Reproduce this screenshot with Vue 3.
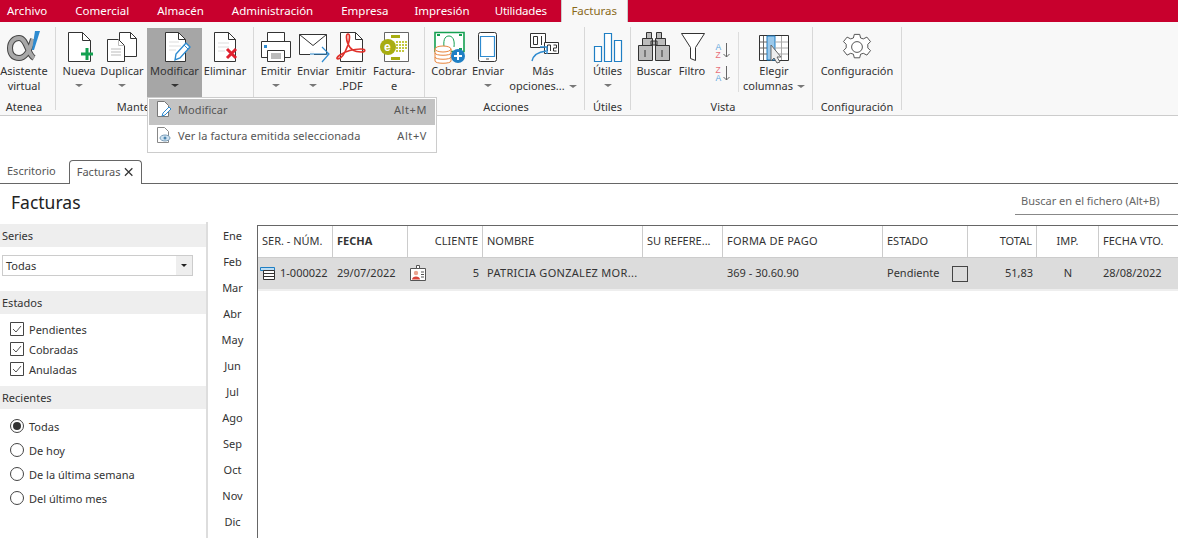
<template>
  <div class="app">
    <!-- Menu bar -->
    <div class="menubar">
      <span
        v-for="tab in menuTabs"
        :key="tab"
        :class="['menu-tab', { active: tab === 'Facturas' }]"
      >{{ tab }}</span>
    </div>

    <!-- Ribbon -->
    <div class="ribbon">
      <section class="group g-atenea">
        <div class="btns">
          <div class="btn w-48">
            <svg class="ico" width="36" height="34" viewBox="0 0 36 34">
              <path d="M27 9C24 20 20 28 13 28 7 28 4 24 4 18 4 12 8 8 13 8 21 8 21 24 28 28" fill="none" stroke="#444" stroke-width="6" />
              <path d="M27 9C24 20 20 28 13 28 7 28 4 24 4 18 4 12 8 8 13 8 21 8 21 24 28 28" fill="none" stroke="#a8a8a8" stroke-width="4" />
              <path d="M29 1h5l-6 19h-2z" fill="#2e8bd0" />
            </svg>
            <span class="lbl">Asistente</span>
            <span class="lbl">virtual</span>
          </div>
        </div>
        <div class="group-name">Atenea</div>
      </section>

      <section class="group g-mant">
        <div class="btns">
          <div class="btn w-38">
            <svg class="ico" width="34" height="34" viewBox="0 0 34 34">
              <path d="M6.5 2.5h14l8 8v21h-22z" fill="#fff" stroke="#333" />
              <path d="M20.5 2.5v8h8" fill="none" stroke="#333" />
              <path d="M25 18v12M19 24h12" stroke="#12a150" stroke-width="3" />
            </svg>
            <span class="lbl">Nueva</span>
            <span class="caret"></span>
          </div>
          <div class="btn w-48">
            <svg class="ico" width="34" height="34" viewBox="0 0 34 34">
              <path d="M14.5 2.5h11l6 6v18h-17z" fill="#fff" stroke="#333" />
              <path d="M25.5 2.5v6h6" fill="none" stroke="#333" />
              <path d="M2.5 9.5h11l6 6v16h-17z" fill="#fff" stroke="#333" />
              <path d="M13.5 9.5v6h6M6 19h10M6 22h10M6 25h10" fill="none" stroke="#bbb" />
            </svg>
            <span class="lbl">Duplicar</span>
            <span class="caret"></span>
          </div>
          <div class="btn w-55 pressed">
            <svg class="ico" width="34" height="34" viewBox="0 0 34 34">
              <path d="M7.5 2.5h13l7 7v22h-20z" fill="#fff" stroke="#333" />
              <path d="M20.5 2.5v7h7" fill="none" stroke="#333" />
              <path d="M11 12h10M11 16h12M11 20h7" stroke="#ddd" />
              <path d="M17 30l1-6 10-11 4 4-10 11z" fill="#fff" stroke="#2e8bd0" stroke-width="1.4" />
              <path d="M26 15l4 4" stroke="#2e8bd0" />
            </svg>
            <span class="lbl">Modificar</span>
            <span class="caret dark"></span>
          </div>
          <div class="btn w-46">
            <svg class="ico" width="34" height="34" viewBox="0 0 34 34">
              <path d="M6.5 2.5h14l7 7v22h-21z" fill="#fff" stroke="#333" />
              <path d="M20.5 2.5v7h7" fill="none" stroke="#333" />
              <path d="M10 13h11M10 17h11M10 21h7" stroke="#ddd" />
              <path d="M19 19l9 9M28 19l-9 9" stroke="#e0212f" stroke-width="3" />
            </svg>
            <span class="lbl">Eliminar</span>
          </div>
        </div>
        <div class="group-name">Mantenimiento</div>
      </section>

      <section class="group g-emit">
        <div class="btns">
          <div class="btn w-36">
            <svg class="ico" width="34" height="34" viewBox="0 0 34 34">
              <path d="M8.5 2.5h17v9h-17z" fill="#fff" stroke="#333" />
              <path d="M2.5 11.5h29v16h-29z" fill="#fff" stroke="#333" />
              <path d="M5 15h3v3H5z" fill="#2e8bd0" />
              <path d="M8.5 20.5h17v11h-17z" fill="#fff" stroke="#333" />
              <path d="M12 24h10M12 26h10M12 28h10" stroke="#777" />
            </svg>
            <span class="lbl">Emitir</span>
            <span class="caret"></span>
          </div>
          <div class="btn w-38">
            <svg class="ico" width="34" height="34" viewBox="0 0 34 34">
              <path d="M3.5 4.500h27v20h-27z" fill="#fff" stroke="#333" />
              <path d="M3.500 4.500l13.500 11 13.500-11" fill="none" stroke="#333" />
              <path d="M14 21h4v6h-4z" fill="#f8f8f8" />
              <path d="M14 24h18M26 17l7 7-7 8" fill="none" stroke="#2e8bd0" stroke-width="1.2" />
            </svg>
            <span class="lbl">Enviar</span>
            <span class="caret"></span>
          </div>
          <div class="btn w-38">
            <svg class="ico" width="34" height="34" viewBox="0 0 34 34">
              <path d="M6.5 2.5h15l7 7v22h-22z" fill="#fff" stroke="#333" />
              <path d="M21.5 2.5v7h7" fill="none" stroke="#333" />
              <path d="M4 29c3 0 7-6 10-14 2-6 2-11 0-11-2 0-2 5 0 10 2 5 7 8 13 8 5 0 5-3 0-3-6 0-15 2-21 6-3 2-4 4-2 4z" fill="none" stroke="#e0302a" stroke-width="1.7" />
            </svg>
            <span class="lbl">Emitir</span>
            <span class="lbl">.PDF</span>
          </div>
          <div class="btn w-48">
            <svg class="ico" width="34" height="34" viewBox="0 0 34 34">
              <path d="M7.5 2.5h24v29h-24z" fill="#fff" stroke="#666" />
              <path d="M14 5h9v3h-9zM14 27h9v3h-9z" fill="#a8ad12" />
              <circle cx="11" cy="17" r="8" fill="#a8ad12" />
              <text x="7" y="21" class="e-mark">e</text>
              <path d="M19 12h11M19 15h11M19 18h11M19 21h9" stroke="#c4c840" stroke-width="2" stroke-dasharray="2 1" />
            </svg>
            <span class="lbl">Factura-</span>
            <span class="lbl">e</span>
          </div>
        </div>
      </section>

      <section class="group g-acc">
        <div class="btns">
          <div class="btn w-42">
            <svg class="ico" width="34" height="34" viewBox="0 0 34 34">
              <path d="M3 2.500h29v19H3z" fill="#fff" stroke="#14a050" stroke-width="1.6" />
              <path d="M12 17c-1-9 2-11 5-11s6 3 5 11" fill="none" stroke="#14a050" />
              <path d="M5 5h3M27 5h3M5 19h3M27 19h3" stroke="#14a050" stroke-width="2" />
              <path d="M3 19v12c0 3 16 3 16 0V19z" fill="#fff" stroke="#e8833a" />
              <ellipse cx="11" cy="19" rx="8" ry="3" fill="#fff" stroke="#e8833a" />
              <path d="M3 23c0 3 16 3 16 0M3 27c0 3 16 3 16 0" fill="none" stroke="#e8833a" />
              <circle cx="26" cy="26" r="7" fill="#1f7fc4" />
              <path d="M26 22v8M22 26h8" stroke="#fff" stroke-width="2" />
            </svg>
            <span class="lbl">Cobrar</span>
          </div>
          <div class="btn w-36">
            <svg class="ico" width="34" height="34" viewBox="0 0 34 34">
              <rect x="7.500" y="2.500" width="18" height="29" rx="2" fill="#fff" stroke="#333" />
              <path d="M9.500 6.500h14v20h-14z" fill="#fff" stroke="#2e8bd0" stroke-width="1.2" />
              <path d="M15 29h3" stroke="#555" />
            </svg>
            <span class="lbl">Enviar</span>
            <span class="caret"></span>
          </div>
          <div class="btn w-74">
            <svg class="ico" width="34" height="34" viewBox="0 0 34 34">
              <path d="M4.500 3.500h15v14h-15z" fill="#fff" stroke="#333" />
              <path d="M18.500 12.500h14v11h-14z" fill="#fff" stroke="#333" />
              <path d="M7.500 6.500h4v8h-4zM15.500 6v9M21.500 21v-6h3v6M27.500 15h3v3h-3v3h3" fill="none" stroke="#333" />
              <path d="M6 31c1-5 6-9 14-10M14 17h7v7" fill="none" stroke="#2e8bd0" stroke-width="1.4" />
            </svg>
            <span class="lbl">Más</span>
            <span class="lbl">opciones...<span class="caret inline"></span></span>
          </div>
        </div>
        <div class="group-name">Acciones</div>
      </section>

      <section class="group g-util">
        <div class="btns">
          <div class="btn w-45">
            <svg class="ico" width="34" height="34" viewBox="0 0 34 34">
              <path d="M3.500 16.500h7v15h-7zM13.500 3.500h7v28h-7zM23.500 10.500h7v21h-7z" fill="#fff" stroke="#1f7fc4" stroke-width="1.2" />
            </svg>
            <span class="lbl">Útiles</span>
            <span class="caret"></span>
          </div>
        </div>
        <div class="group-name">Útiles</div>
      </section>

      <section class="group g-vista">
        <div class="btns">
          <div class="btn w-40">
            <svg class="ico" width="34" height="34" viewBox="0 0 34 34">
              <path d="M9.500 2.500h5v6h-5zM19.500 2.500h5v6h-5zM5.500 8.500h10v7h-10zM18.500 8.500h10v7h-10zM14 11h6v4h-6zM1.500 15.500h14v15h-14zM18.500 15.500h14v15h-14z" fill="#bbb" stroke="#333" />
              <path d="M8 20v7M25 20v7" stroke="#333" />
            </svg>
            <span class="lbl">Buscar</span>
          </div>
          <div class="btn w-36">
            <svg class="ico" width="30" height="34" viewBox="0 0 30 34">
              <path d="M4.500 3.500h23l-9 14v13l-5-2v-11z" fill="#fff" stroke="#333" />
            </svg>
            <span class="lbl">Filtro</span>
          </div>
          <div class="sorts">
            <svg width="20" height="17" viewBox="0 0 20 17">
              <text x="1.500" y="7.500" class="sort a">A</text>
              <text x="1.500" y="16" class="sort z">Z</text>
              <path d="M12.500 1v14M9.500 12l3 3 3-3" fill="none" stroke="#666" />
            </svg>
            <svg width="20" height="17" viewBox="0 0 20 17">
              <text x="1.500" y="7.500" class="sort z">Z</text>
              <text x="1.500" y="16" class="sort a">A</text>
              <path d="M12.500 1v14M9.500 12l3 3 3-3" fill="none" stroke="#666" />
            </svg>
          </div>
          <div class="btn w-70">
            <svg class="ico" width="34" height="34" viewBox="0 0 34 34">
              <path d="M2.500 5.500h29v25h-29z" fill="#fff" stroke="#333" />
              <path d="M10 6h8v24h-8z" fill="#9ac8ea" stroke="#1f7fc4" />
              <path d="M18 12h13M18 18h13M18 24h13M24.500 6v24" stroke="#aaa" />
              <path d="M3 12h7M3 18h7M3 24h7M6.500 6v24" stroke="#666" />
              <path d="M14 15v16l3-3 3 5 3-1-3-5h4z" fill="#eee" stroke="#666" />
            </svg>
            <span class="lbl">Elegir</span>
            <span class="lbl">columnas<span class="caret inline"></span></span>
          </div>
        </div>
        <div class="group-name">Vista</div>
      </section>

      <section class="group g-conf">
        <div class="btns">
          <div class="btn w-88">
            <svg class="ico" width="34" height="34" viewBox="0 0 34 34">
              <g transform="translate(1.700 1.700) scale(.9)">
                <path d="M14 3h6l1 4 3 1 4-2 4 5-3 3v4l3 3-4 5-4-2-3 1-1 4h-6l-1-4-3-1-4 2-4-5 3-3v-4l-3-3 4-5 4 2 3-1z" fill="#fff" stroke="#444" />
                <circle cx="17" cy="17" r="6" fill="#fff" stroke="#444" />
              </g>
            </svg>
            <span class="lbl">Configuración</span>
          </div>
        </div>
        <div class="group-name">Configuración</div>
      </section>

      <!-- Dropdown of Modificar -->
      <div class="dropdown">
        <div class="dd-item on">
          <svg width="16" height="18" viewBox="0 0 16 18">
            <path d="M1.500 1.500h7l4 4v11h-11z" fill="#fff" stroke="#777" />
            <path d="M6 16l1-3 6-6 2 2-6 6z" fill="#fff" stroke="#2e8bd0" />
          </svg>
          <span class="dd-text">Modificar</span>
          <span class="dd-key">Alt+M</span>
        </div>
        <div class="dd-item">
          <svg width="16" height="18" viewBox="0 0 16 18">
            <path d="M1.500 1.500h7l4 4v11h-11z" fill="#fff" stroke="#888" />
            <ellipse cx="9" cy="12" rx="5" ry="3" fill="#cfe2f0" stroke="#7a9db8" />
            <circle cx="9" cy="12" r="1.500" fill="#4d86b0" />
          </svg>
          <span class="dd-text">Ver la factura emitida seleccionada</span>
          <span class="dd-key">Alt+V</span>
        </div>
      </div>
    </div>

    <!-- Document tabs -->
    <div class="doc-tabs">
      <span class="doc-tab">Escritorio</span>
      <span class="doc-tab current">
        Facturas
        <svg width="10" height="10" viewBox="0 0 10 10">
          <path d="M1 1l8 8M9 1l-8 8" stroke="#333" stroke-width="1.300" />
        </svg>
      </span>
    </div>

    <div class="title-row">
      <h1>Facturas</h1>
      <div class="search">Buscar en el fichero (Alt+B)</div>
    </div>

    <div class="body">
      <aside class="filters">
        <div class="sec">Series</div>
        <div class="select">
          <span>Todas</span>
          <span class="select-btn"><i></i></span>
        </div>
        <div class="sec">Estados</div>
        <div class="checks">
          <label v-for="c in estados" :key="c" class="check">
            <svg width="14" height="14" viewBox="0 0 14 14">
              <path d="M.5.500h13v13H.5z" fill="#fff" stroke="#444" />
              <path d="M3 7l3 3 5-6" fill="none" stroke="#555" />
            </svg>
            {{ c }}
          </label>
        </div>
        <div class="sec">Recientes</div>
        <div class="radios">
          <label v-for="(r, i) in recientes" :key="r" class="radio">
            <span :class="['dot', { sel: i === 0 }]"></span>
            {{ r }}
          </label>
        </div>
      </aside>

      <div class="months">
        <span v-for="m in months" :key="m">{{ m }}</span>
      </div>

      <div class="grid">
        <div class="row head">
          <div class="cell">SER. - NÚM.</div>
          <div class="cell"><b>FECHA</b></div>
          <div class="cell right">CLIENTE</div>
          <div class="cell">NOMBRE</div>
          <div class="cell">SU REFERE...</div>
          <div class="cell wide">FORMA DE PAGO</div>
          <div class="cell">ESTADO</div>
          <div class="cell right">TOTAL</div>
          <div class="cell center">IMP.</div>
          <div class="cell">FECHA VTO.</div>
        </div>
        <div class="row data">
          <div class="cell first">
            <svg width="15" height="14" viewBox="0 0 15 14">
              <path d="M.5 1.500h14v3H.5z" fill="#bcdcf2" stroke="#1f7fc4" />
              <path d="M3.500 4.500h11v9h-11zM3.500 7.500h11M3.500 10.500h11" fill="#fff" stroke="#333" />
            </svg>
            1-000022
          </div>
          <div class="cell">29/07/2022</div>
          <div class="cell right client">
            <svg class="badge" width="17" height="16" viewBox="0 0 17 16">
              <path d="M.5 3.500h15v12H.5z" fill="#fff" stroke="#555" />
              <path d="M6.500.5h3v3h-3z" fill="#fff" stroke="#555" />
              <circle cx="6" cy="8" r="2.200" fill="#eba48f" />
              <path d="M2 14.500c0-4 8-4 8 0z" fill="#d9453a" />
              <path d="M11 7h3M11 9.500h3M11 12h3" stroke="#555" />
            </svg>
            5
          </div>
          <div class="cell wider">PATRICIA GONZALEZ MOR...</div>
          <div class="cell"></div>
          <div class="cell">369 - 30.60.90</div>
          <div class="cell estado">Pendiente <span class="box"></span></div>
          <div class="cell right">51,83</div>
          <div class="cell center">N</div>
          <div class="cell">28/08/2022</div>
        </div>
      </div>
    </div>
  </div>
</template>

<script setup>
const menuTabs = ['Archivo', 'Comercial', 'Almacén', 'Administración', 'Empresa', 'Impresión', 'Utilidades', 'Facturas'];
const estados = ['Pendientes', 'Cobradas', 'Anuladas'];
const recientes = ['Todas', 'De hoy', 'De la última semana', 'Del último mes'];
const months = ['Ene', 'Feb', 'Mar', 'Abr', 'May', 'Jun', 'Jul', 'Ago', 'Sep', 'Oct', 'Nov', 'Dic'];
</script>

<style>
html, body { margin: 0; overflow: hidden; background: #fff; }
</style>

<style scoped>
.app {
  width: 1178px;
  height: 538px;
  overflow: hidden;
  font-family: "Noto Sans", sans-serif;
  font-size: 11px;
  color: #333;
  background: #fff;
}

/* Menu bar */
.menubar {
  display: flex;
  gap: 28px;
  height: 22px;
  padding-left: 7px;
  background: #c8002d;
  color: #fff;
  font-size: 11.5px;
  line-height: 22px;
}
.menu-tab:nth-child(6) { margin-left: -2px; }
.menu-tab:nth-child(7) { margin-left: -3px; letter-spacing: -.2px; }
.menu-tab.active {
  width: 67px;
  margin-left: -14px;
  box-sizing: border-box;
  text-align: center;
  background: #f8f8f8;
  color: #8a6a1a;
  border: 1px solid #ccc;
  border-width: 0 1px;
}

/* Ribbon */
.ribbon {
  position: relative;
  display: flex;
  height: 94px;
  padding-top: 5px;
  box-sizing: border-box;
  background: #f8f8f8;
  border-bottom: 1px solid #ccc;
  margin-bottom: 44px;
}
.group {
  display: flex;
  flex-direction: column;
  height: 83px;
  box-sizing: border-box;
  border-right: 1px solid #d8d8d8;
}
.btns { display: flex; height: 73px; align-items: flex-start; }
.group-name {
  height: 10px;
  line-height: 14px;
  text-align: center;
  white-space: nowrap;
}
.g-atenea { width: 56px; padding-right: 7px; }
.g-mant { width: 198px; padding-left: 4px; }
.g-emit { width: 171px; padding-left: 4px; }
.g-acc { width: 160px; padding-left: 3px; }
.g-util { width: 46px; }
.g-vista { width: 182px; padding-left: 3px; }
.g-conf { width: 89px; }

.btn {
  display: flex;
  flex-direction: column;
  align-items: center;
  height: 69px;
  margin-top: 1px;
  padding-top: 2px;
  box-sizing: border-box;
  white-space: nowrap;
}
.ico { flex: none; margin-bottom: -1px; }
.lbl { height: 15px; line-height: 15px; }
.w-36 { width: 36px; }
.w-38 { width: 38px; }
.w-40 { width: 40px; }
.w-42 { width: 42px; }
.w-45 { width: 45px; }
.w-46 { width: 46px; }
.w-48 { width: 48px; }
.w-55 { width: 55px; margin-left: 1px; }
.w-70 { width: 70px; }
.w-74 { width: 74px; }
.w-88 { width: 88px; }
.pressed { background: #a6a6a6; }

.caret {
  width: 0;
  height: 0;
  margin-top: 6px;
  border-left: 4px solid transparent;
  border-right: 4px solid transparent;
  border-top: 3px solid #777;
}
.caret.dark { border-top-color: #333; }
.caret.inline {
  display: inline-block;
  margin: 0 0 2px 4px;
  vertical-align: middle;
}

.e-mark { font: bold 12px "Liberation Sans", sans-serif; fill: #fff; }
.sort { font: 8.5px "Liberation Sans", sans-serif; }
.sort.a { fill: #5aa6dc; }
.sort.z { fill: #e8707a; }

.sorts {
  display: flex;
  flex-direction: column;
  align-items: center;
  gap: 6px;
  width: 29px;
  height: 60px;
  margin-top: 5px;
  padding-top: 10px;
  box-sizing: border-box;
  border-right: 1px solid #ddd;
}

/* Dropdown */
.dropdown {
  position: absolute;
  left: 147px;
  top: 75px;
  width: 290px;
  height: 56px;
  box-sizing: border-box;
  padding: 1px;
  background: #fff;
  border: 1px solid #ccc;
}
.dd-item {
  display: flex;
  align-items: center;
  height: 26px;
  box-sizing: border-box;
  padding: 0 8px 6px 7px;
  color: #555;
}
.dd-item.on { background: #c3c3c3; }
.dd-text { margin-left: 6px; flex: 1; letter-spacing: .08px; }
.dd-key { letter-spacing: .6px; }

/* Document tabs */
.doc-tabs {
  display: flex;
  height: 24px;
  box-sizing: border-box;
  border-bottom: 1px solid #666;
  padding-left: 1px;
}
.doc-tab { padding: 0 6px; line-height: 22px; color: #555; }
.doc-tab.current {
  display: flex;
  align-items: center;
  gap: 4px;
  margin-left: 7px;
  width: 73px;
  box-sizing: border-box;
  height: 24px;
  padding: 0 7px 2px;
  background: #fff;
  border: 1px solid #666;
  border-bottom: 0;
  border-radius: 4px 4px 0 0;
  white-space: nowrap;
}

.title-row {
  display: flex;
  justify-content: space-between;
  align-items: flex-start;
  height: 38px;
}
h1 {
  margin: 6px 0 0 11px;
  font-size: 17.5px;
  font-weight: 400;
  line-height: 24px;
  color: #222;
}
.search {
  width: 163px;
  height: 31px;
  box-sizing: border-box;
  padding: 9px 6px 0;
  border-bottom: 1px solid #888;
  color: #666;
}

/* Body */
.body { display: flex; height: 316px; }
.filters {
  width: 206px;
  flex: none;
  padding-top: 2px;
  border-right: 2px solid #ddd;
}
.sec {
  height: 23px;
  line-height: 23px;
  padding-left: 2px;
  background: #eee;
}
.select {
  display: flex;
  justify-content: space-between;
  align-items: center;
  width: 191px;
  height: 21px;
  margin: 8px 0 15px 2px;
  box-sizing: border-box;
  border: 1px solid #ccc;
  padding-left: 3px;
  background: #fff;
}
.select-btn {
  display: flex;
  align-items: center;
  justify-content: center;
  width: 16px;
  height: 19px;
  background: #eee;
}
.select-btn i {
  border-left: 3px solid transparent;
  border-right: 3px solid transparent;
  border-top: 3px solid #222;
}
.checks { display: flex; flex-direction: column; padding: 5px 0 7px 10px; }
.check { display: flex; align-items: center; gap: 5px; height: 20px; }
.radios { display: flex; flex-direction: column; padding: 5px 0 0 10px; }
.radio { display: flex; align-items: center; gap: 5px; height: 24px; }
.dot {
  position: relative;
  width: 12px;
  height: 12px;
  border: 1px solid #444;
  border-radius: 50%;
  background: #fff;
}
.dot.sel::after {
  content: "";
  position: absolute;
  left: 2px;
  top: 2px;
  width: 8px;
  height: 8px;
  border-radius: 50%;
  background: #333;
}

.months {
  display: flex;
  flex-direction: column;
  width: 49px;
  flex: none;
  padding-top: 1px;
  text-align: center;
}
.months span { height: 26px; line-height: 26px; }

/* Grid */
.grid {
  flex: 1;
  margin-top: 3px;
  border-top: 1px solid #666;
  border-left: 1px solid #666;
}
.row {
  display: grid;
  grid-template-columns: 75px 75px 75px 160px 80px 160px 85px 69px 62px 1fr;
}
.head { height: 32px; border-bottom: 1px solid #ccc; box-sizing: border-box; }
.data { height: 33px; background: #dcdcdc; border-bottom: 2px solid #eee; box-sizing: border-box; }
.cell {
  display: flex;
  align-items: center;
  padding: 0 4px 2px;
  white-space: nowrap;
  overflow: hidden;
}
.head .cell { border-right: 1px solid #ccc; }
.head .cell:last-child { border-right: 0; }
.right { justify-content: flex-end; }
.center { justify-content: center; }
.wide { letter-spacing: .25px; }
.wider { letter-spacing: .3px; }
.first { gap: 5px; padding-left: 2px; }
.client { position: relative; }
.badge { position: absolute; left: 2px; top: 7px; }
.estado { justify-content: space-between; padding-right: 0; }
.box {
  width: 14px;
  height: 14px;
  margin-top: 2px;
  border: 1px solid #444;
}
</style>
